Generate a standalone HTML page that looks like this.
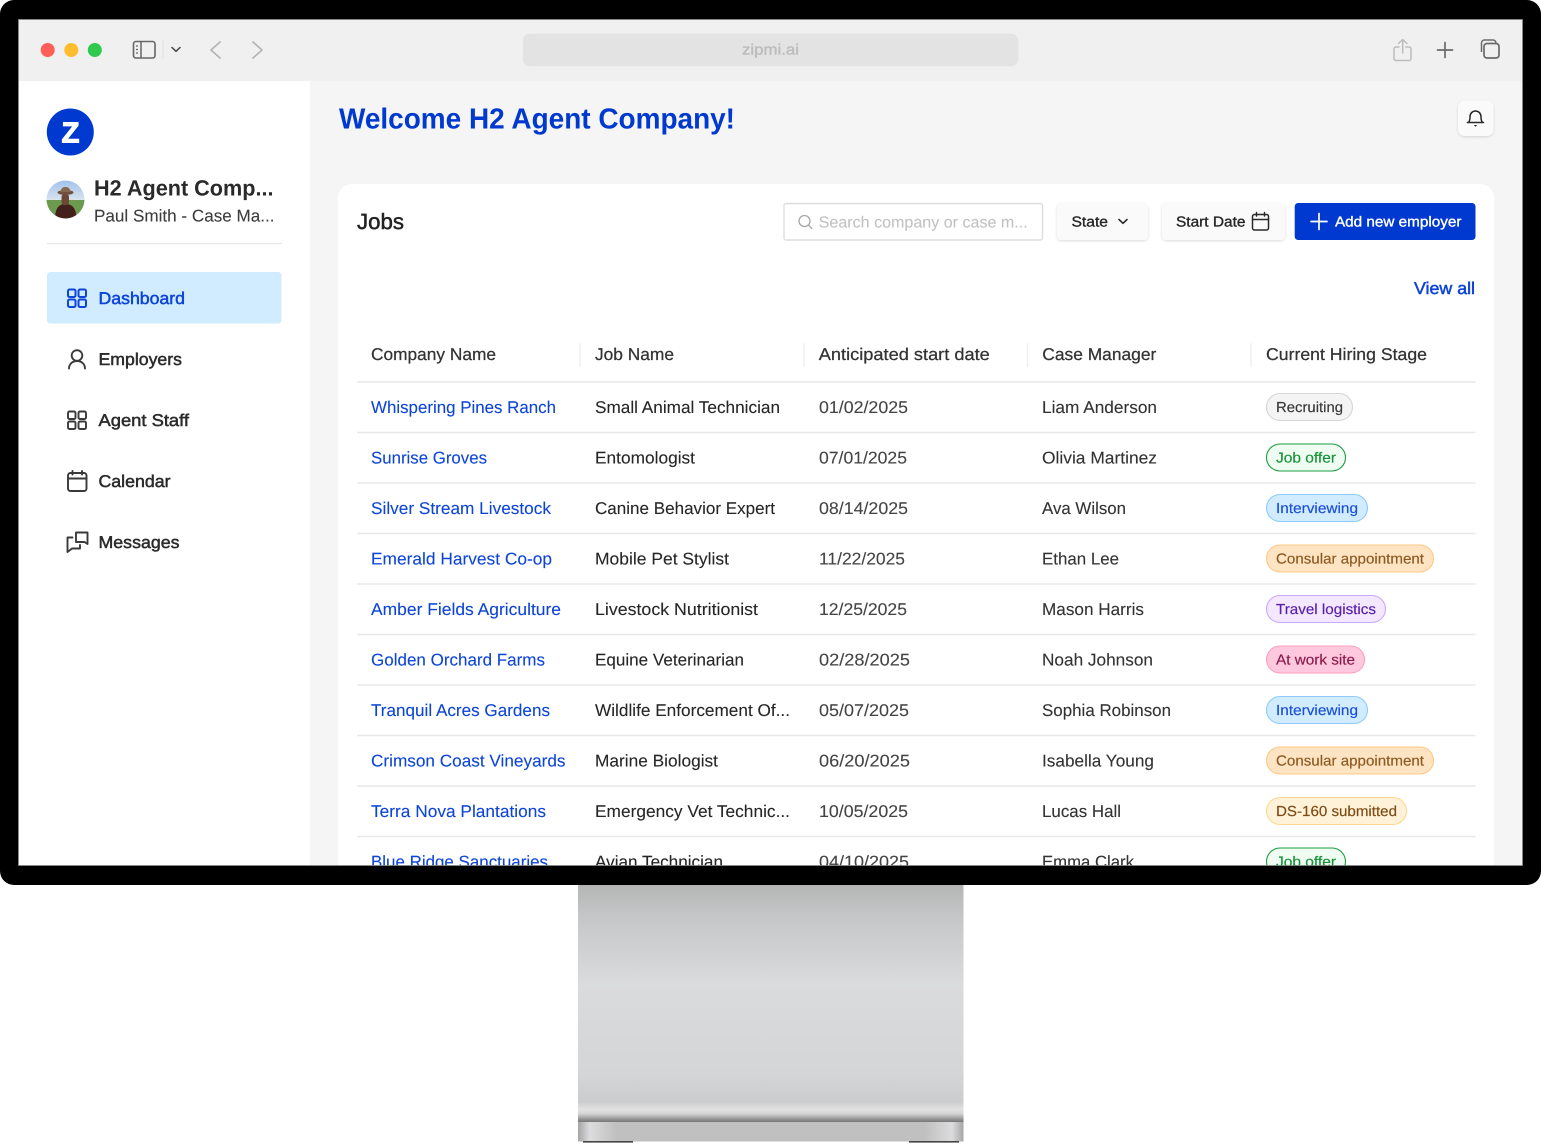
<!DOCTYPE html>
<html lang="en"><head><meta charset="utf-8"><title>Zipmi</title>
<style>
html,body{margin:0;padding:0;background:#fff;width:1541px;height:1144px;overflow:hidden}
svg{display:block;position:absolute;left:0;top:0}
text{font-family:"Liberation Sans",sans-serif;text-rendering:geometricPrecision}
.t{font-size:17px;fill:#262626;stroke:#262626;stroke-width:.1px}
.l{font-size:17px;fill:#0d45d8;stroke:#0d45d8;stroke-width:.1px}
.d{font-size:17px;fill:#444;stroke:#444;stroke-width:.1px}
.h{font-size:17px;fill:#333;stroke:#333;stroke-width:.25px}
.n{font-size:17px;fill:#2b2b2b;stroke:#2b2b2b;stroke-width:.5px}
.b{font-size:14.5px;stroke-width:.18px}
.m{font-size:14.5px;fill:#262626;stroke:#262626;stroke-width:.35px}
.i{fill:none;stroke:#3a3a3a;stroke-width:1.9;stroke-linecap:round;stroke-linejoin:round}
.r{stroke:#e8e8e8;stroke-width:1.4}
</style></head><body>
<svg width="1541" height="1144" viewBox="0 0 1541 1144" xmlns="http://www.w3.org/2000/svg">
<defs>
<linearGradient id="st" x1="0" y1="0" x2="0" y2="1">
<stop offset="0" stop-color="#b4b5b5"/><stop offset=".14" stop-color="#c6c7c8"/><stop offset=".42" stop-color="#dadbdd"/><stop offset=".8" stop-color="#d4d5d7"/><stop offset=".915" stop-color="#cbcccd"/><stop offset=".945" stop-color="#e2e2e3"/><stop offset=".965" stop-color="#d4d4d4"/><stop offset=".99" stop-color="#8f8f8f"/><stop offset="1" stop-color="#777"/>
</linearGradient>
<linearGradient id="ft" x1="0" y1="0" x2="1" y2="0">
<stop offset="0" stop-color="#a5a5a5"/><stop offset=".03" stop-color="#dcdcde"/><stop offset=".1" stop-color="#c0c0c0"/><stop offset=".9" stop-color="#c0c0c0"/><stop offset=".97" stop-color="#dcdcde"/><stop offset="1" stop-color="#a5a5a5"/>
</linearGradient>
<linearGradient id="sky" x1="0" y1="0" x2="0" y2="1"><stop offset="0" stop-color="#9fc0ea"/><stop offset="1" stop-color="#dfe8ef"/></linearGradient>
<clipPath id="av"><circle cx="65.5" cy="199.5" r="19"/></clipPath>
<filter id="sh" x="-20%" y="-20%" width="140%" height="150%"><feDropShadow dx="0" dy="1" stdDeviation="1.3" flood-color="#000" flood-opacity=".14"/></filter>
</defs>

<!-- stand -->
<rect x="578" y="885" width="385.5" height="237" fill="url(#st)"/>
<rect x="578" y="1122" width="385.5" height="19.5" fill="url(#ft)"/>
<rect x="583" y="1141" width="50" height="1.6" fill="#444"/>
<rect x="909" y="1141" width="50" height="1.6" fill="#444"/>

<!-- screen background -->
<rect x="18" y="19" width="1505" height="847" fill="#f5f5f5"/>
<rect x="18" y="19" width="1505" height="62" fill="#f0f0f0"/>
<rect x="18" y="81" width="292" height="785" fill="#fff"/>

<!-- browser toolbar -->
<circle cx="47.7" cy="50" r="7" fill="#fe5f57"/>
<circle cx="71.3" cy="50" r="7" fill="#febc2e"/>
<circle cx="94.8" cy="50" r="7" fill="#30c94d"/>
<rect x="133.5" y="41.5" width="21.5" height="16.5" rx="2.5" fill="none" stroke="#666" stroke-width="1.6"/>
<path d="M141 42v16" stroke="#666" stroke-width="1.5"/>
<path d="M136 46h2M136 49.500h2M136 53h2" stroke="#666" stroke-width="1.3"/>
<path d="M163 40v19" stroke="#e0e0e0" stroke-width="1"/>
<path d="M172 47.500l4 3.800 4-3.800" fill="none" stroke="#444" stroke-width="1.500" stroke-linecap="round" stroke-linejoin="round"/>
<path d="M220 42l-9 8 9 8" fill="none" stroke="#b4b4b4" stroke-width="1.700" stroke-linecap="round" stroke-linejoin="round"/>
<path d="M253 42l9 8-9 8" fill="none" stroke="#b4b4b4" stroke-width="1.700" stroke-linecap="round" stroke-linejoin="round"/>
<rect x="522.800" y="33.700" width="495.500" height="32.500" rx="7" fill="#e3e3e3"/>
<text x="742" y="54.500" font-size="15" fill="#bcbcbc" stroke="#bcbcbc" stroke-width=".4" textLength="57" lengthAdjust="spacingAndGlyphs">zipmi.ai</text>
<path d="M1399 47h-3a2 2 0 0 0-2 2v9.500a2 2 0 0 0 2 2h13a2 2 0 0 0 2-2V49a2 2 0 0 0-2-2h-3M1402.700 53V39.500M1398.500 43.500l4.200-4 4.200 4" fill="none" stroke="#bcbcbc" stroke-width="1.500" stroke-linecap="round" stroke-linejoin="round"/>
<path d="M1445 42.500v15M1437.500 50h15" stroke="#6a6a6a" stroke-width="1.700" stroke-linecap="round"/>
<path d="M1481.500 52v-9a3 3 0 0 1 3-3h8.500a3 3 0 0 1 3 3" fill="none" stroke="#6a6a6a" stroke-width="1.500"/>
<rect x="1484" y="43.500" width="15" height="14.500" rx="3" fill="#f0f0f0" stroke="#6a6a6a" stroke-width="1.700"/>

<!-- sidebar -->
<circle cx="70.300" cy="132" r="23.500" fill="#0039cf"/>
<text x="61.500" y="142.500" font-size="29" font-weight="700" fill="#fff" stroke="#fff" stroke-width="1" textLength="18" lengthAdjust="spacingAndGlyphs">Z</text>
<g clip-path="url(#av)">
<rect x="46" y="180" width="40" height="22" fill="url(#sky)"/>
<rect x="46" y="200" width="40" height="20" fill="#6c9a4f"/>
<path d="M55 220c0-11 3-16 10.500-16s11 5 11 16z" fill="#43201c"/>
<rect x="61.500" y="194" width="7.500" height="11" rx="3" fill="#6e4636"/>
<ellipse cx="65.500" cy="192.500" rx="8" ry="2.400" fill="#70503c"/>
<path d="M60.500 192c.5-4 2.500-5 5-5s4.500 1 5 5z" fill="#86684e"/>
</g>
<text x="94" y="195.500" font-size="22" font-weight="700" fill="#2a2a2a" textLength="179.500" lengthAdjust="spacingAndGlyphs">H2 Agent Comp...</text>
<text x="94" y="221.500" font-size="17" fill="#3d3d3d" stroke="#3d3d3d" stroke-width=".1" textLength="180.500" lengthAdjust="spacingAndGlyphs">Paul Smith - Case Ma...</text>
<path d="M47 243.500h235" stroke="#e6e6e6" stroke-width="1.200"/>
<rect x="47" y="272" width="234.500" height="51.500" rx="3.500" fill="#d1ebff"/>

<g fill="none" stroke="#0d45d8" stroke-width="2">
<rect x="68" y="289.500" width="7.500" height="7.500" rx="1.500"/><rect x="78.500" y="289.500" width="7.500" height="7.500" rx="1.500"/>
<rect x="68" y="299.500" width="7.500" height="7.500" rx="1.500"/><rect x="78.500" y="299.500" width="7.500" height="7.500" rx="1.500"/>
</g>
<text x="98.500" y="304" class="n" style="fill:#0d45d8;stroke:#0d45d8" textLength="86.500" lengthAdjust="spacingAndGlyphs">Dashboard</text>

<g class="i"><circle cx="77" cy="355.500" r="5.300"/><path d="M69 368.500c0-4.500 3.500-7.500 8-7.500s8 3 8 7.500"/></g>
<text x="98.500" y="365" class="n" textLength="83.500" lengthAdjust="spacingAndGlyphs">Employers</text>

<g class="i">
<rect x="68" y="411.500" width="7.500" height="7.500" rx="1.500"/><rect x="78.500" y="411.500" width="7.500" height="7.500" rx="1.500"/>
<rect x="68" y="421.500" width="7.500" height="7.500" rx="1.500"/><rect x="78.500" y="421.500" width="7.500" height="7.500" rx="1.500"/>
</g>
<text x="98.500" y="426" class="n" textLength="90.500" lengthAdjust="spacingAndGlyphs">Agent Staff</text>

<g class="i"><rect x="68" y="473" width="18.500" height="18" rx="2.500"/><path d="M68 478.500h18.500M72.500 471v3.500M82 471v3.500"/></g>
<text x="98.500" y="487" class="n" textLength="72" lengthAdjust="spacingAndGlyphs">Calendar</text>

<g class="i"><path d="M76 532.500h11.500v11.500l-3-2H76zM72.500 537.500H67.500v14.500l4.500-3.500h8v-3.500"/></g>
<text x="98.500" y="548" class="n" textLength="81" lengthAdjust="spacingAndGlyphs">Messages</text>

<!-- header -->
<text x="339" y="128.500" font-size="29" font-weight="700" fill="#0039cf" textLength="396" lengthAdjust="spacingAndGlyphs">Welcome H2 Agent Company!</text>
<rect x="1458" y="100.500" width="35.500" height="35.500" rx="7" fill="#fafafa" filter="url(#sh)"/>
<path d="M1468.500 122.500c1.200-1.500 1.500-2.500 1.500-5.500 0-3.500 2.200-6 5.500-6s5.500 2.500 5.500 6c0 3 .3 4 1.500 5.500zM1467.500 122.500h16" fill="none" stroke="#2a2a2a" stroke-width="1.500" stroke-linejoin="round" stroke-linecap="round"/>
<path d="M1473.800 125h3.400l-1.700 1.800z" fill="#2a2a2a"/>

<!-- card -->
<rect x="338" y="184" width="1156" height="700" rx="14" fill="#fff"/>
<text x="357" y="229" font-size="22" fill="#222" stroke="#222" stroke-width=".5" textLength="47" lengthAdjust="spacingAndGlyphs">Jobs</text>

<rect x="784" y="203.500" width="258.500" height="36.500" rx="2" fill="#fff" stroke="#dedede" stroke-width="1.400"/>
<circle cx="804.500" cy="221" r="5.500" fill="none" stroke="#a8a8a8" stroke-width="1.300"/><path d="M808.500 225l3.300 3.500" stroke="#a8a8a8" stroke-width="1.300" stroke-linecap="round"/>
<text x="818.700" y="227.500" font-size="16" fill="#c2c2c2" stroke="#c2c2c2" stroke-width=".1" textLength="209" lengthAdjust="spacingAndGlyphs">Search company or case m...</text>

<rect x="1057" y="203" width="91" height="37" rx="4" fill="#fafafa" filter="url(#sh)"/>
<text x="1071.500" y="226.500" class="m" textLength="36.500" lengthAdjust="spacingAndGlyphs">State</text>
<path d="M1119 219.500l4 3.800 4-3.800" fill="none" stroke="#2a2a2a" stroke-width="1.600" stroke-linecap="round" stroke-linejoin="round"/>

<rect x="1162" y="203" width="123" height="37" rx="4" fill="#fafafa" filter="url(#sh)"/>
<text x="1176" y="226.500" class="m" textLength="69.500" lengthAdjust="spacingAndGlyphs">Start Date</text>
<g fill="none" stroke="#2a2a2a" stroke-width="1.500" stroke-linecap="round"><rect x="1252.500" y="214.500" width="16" height="15.500" rx="2"/><path d="M1252.500 219.500h16M1256.500 212.500v3.500M1264.500 212.500v3.500"/></g>

<rect x="1294.700" y="203" width="180.800" height="37" rx="3.500" fill="#0039cf"/>
<path d="M1319 213.500v16M1311 221.500h16" stroke="#fff" stroke-width="1.700" stroke-linecap="round"/>
<text x="1335" y="226.500" class="m" style="fill:#fff;stroke:#fff" textLength="126.500" lengthAdjust="spacingAndGlyphs">Add new employer</text>

<text x="1414" y="294" font-size="17" fill="#0d45d8" stroke="#0d45d8" stroke-width=".5" textLength="61" lengthAdjust="spacingAndGlyphs">View all</text>

<!-- table head -->
<text x="371" y="360" class="h" textLength="125" lengthAdjust="spacingAndGlyphs">Company Name</text>
<text x="595" y="360" class="h" textLength="79" lengthAdjust="spacingAndGlyphs">Job Name</text>
<text x="818.800" y="360" class="h" textLength="171" lengthAdjust="spacingAndGlyphs">Anticipated start date</text>
<text x="1042.300" y="360" class="h" textLength="114" lengthAdjust="spacingAndGlyphs">Case Manager</text>
<text x="1266" y="360" class="h" textLength="161" lengthAdjust="spacingAndGlyphs">Current Hiring Stage</text>
<path d="M580 343v24M804 343v24M1027.500 343v24M1251 343v24" stroke="#efefef" stroke-width="1.300"/>
<path class="r" d="M357 382h1118.500" stroke-width="1.800"/>
<path class="r" d="M357 432.500h1118.500M357 483h1118.500M357 533.500h1118.500M357 584h1118.500M357 634.500h1118.500M357 685h1118.500M357 735.500h1118.500M357 786h1118.500M357 836.500h1118.500"/>

<!-- row 1 -->
<text x="371" y="413" class="l" textLength="185" lengthAdjust="spacingAndGlyphs">Whispering Pines Ranch</text>
<text x="595" y="413" class="t" textLength="185" lengthAdjust="spacingAndGlyphs">Small Animal Technician</text>
<text x="819" y="413" class="d" textLength="89" lengthAdjust="spacingAndGlyphs">01/02/2025</text>
<text x="1042" y="413" class="t" style="fill:#333" textLength="115" lengthAdjust="spacingAndGlyphs">Liam Anderson</text>
<rect x="1266.500" y="393.500" width="86" height="27" rx="13.500" fill="#f4f4f4" stroke="#d6d6d6" stroke-width="1.100"/>
<text x="1276" y="412" class="b" fill="#383838" stroke="#383838" textLength="67" lengthAdjust="spacingAndGlyphs">Recruiting</text>

<!-- row 2 -->
<text x="371" y="463.500" class="l" textLength="116" lengthAdjust="spacingAndGlyphs">Sunrise Groves</text>
<text x="595" y="463.500" class="t" textLength="100" lengthAdjust="spacingAndGlyphs">Entomologist</text>
<text x="819" y="463.500" class="d" textLength="88" lengthAdjust="spacingAndGlyphs">07/01/2025</text>
<text x="1042" y="463.500" class="t" style="fill:#333" textLength="115" lengthAdjust="spacingAndGlyphs">Olivia Martinez</text>
<rect x="1266.500" y="444" width="79" height="27" rx="13.500" fill="#eefcf1" stroke="#1f9c41" stroke-width="1.100"/>
<text x="1276" y="462.500" class="b" fill="#17933a" stroke="#17933a" textLength="60" lengthAdjust="spacingAndGlyphs">Job offer</text>

<!-- row 3 -->
<text x="371" y="514" class="l" textLength="180" lengthAdjust="spacingAndGlyphs">Silver Stream Livestock</text>
<text x="595" y="514" class="t" textLength="180" lengthAdjust="spacingAndGlyphs">Canine Behavior Expert</text>
<text x="819" y="514" class="d" textLength="89" lengthAdjust="spacingAndGlyphs">08/14/2025</text>
<text x="1042" y="514" class="t" style="fill:#333" textLength="84" lengthAdjust="spacingAndGlyphs">Ava Wilson</text>
<rect x="1266.500" y="494.500" width="101" height="27" rx="13.500" fill="#d1ebff" stroke="#8fcbff" stroke-width="1.100"/>
<text x="1276" y="513" class="b" fill="#1a4fd8" stroke="#1a4fd8" textLength="82" lengthAdjust="spacingAndGlyphs">Interviewing</text>

<!-- row 4 -->
<text x="371" y="564.500" class="l" textLength="181" lengthAdjust="spacingAndGlyphs">Emerald Harvest Co-op</text>
<text x="595" y="564.500" class="t" textLength="134" lengthAdjust="spacingAndGlyphs">Mobile Pet Stylist</text>
<text x="819" y="564.500" class="d" textLength="86" lengthAdjust="spacingAndGlyphs">11/22/2025</text>
<text x="1042" y="564.500" class="t" style="fill:#333" textLength="77" lengthAdjust="spacingAndGlyphs">Ethan Lee</text>
<rect x="1266.500" y="545" width="167" height="27" rx="13.500" fill="#ffe4c4" stroke="#ffc884" stroke-width="1.100"/>
<text x="1276" y="563.500" class="b" fill="#8c5a20" stroke="#8c5a20" textLength="148" lengthAdjust="spacingAndGlyphs">Consular appointment</text>

<!-- row 5 -->
<text x="371" y="615" class="l" textLength="190" lengthAdjust="spacingAndGlyphs">Amber Fields Agriculture</text>
<text x="595" y="615" class="t" textLength="163" lengthAdjust="spacingAndGlyphs">Livestock Nutritionist</text>
<text x="819" y="615" class="d" textLength="88" lengthAdjust="spacingAndGlyphs">12/25/2025</text>
<text x="1042" y="615" class="t" style="fill:#333" textLength="102" lengthAdjust="spacingAndGlyphs">Mason Harris</text>
<rect x="1266.500" y="595.500" width="119" height="27" rx="13.500" fill="#f3e8ff" stroke="#cba8ff" stroke-width="1.100"/>
<text x="1276" y="614" class="b" fill="#5a20a8" stroke="#5a20a8" textLength="100" lengthAdjust="spacingAndGlyphs">Travel logistics</text>

<!-- row 6 -->
<text x="371" y="665.500" class="l" textLength="174" lengthAdjust="spacingAndGlyphs">Golden Orchard Farms</text>
<text x="595" y="665.500" class="t" textLength="149" lengthAdjust="spacingAndGlyphs">Equine Veterinarian</text>
<text x="819" y="665.500" class="d" textLength="91" lengthAdjust="spacingAndGlyphs">02/28/2025</text>
<text x="1042" y="665.500" class="t" style="fill:#333" textLength="111" lengthAdjust="spacingAndGlyphs">Noah Johnson</text>
<rect x="1266.500" y="646" width="98" height="27" rx="13.500" fill="#ffc8dc" stroke="#ff9fc2" stroke-width="1.100"/>
<text x="1276" y="664.500" class="b" fill="#8c1c50" stroke="#8c1c50" textLength="79" lengthAdjust="spacingAndGlyphs">At work site</text>

<!-- row 7 -->
<text x="371" y="716" class="l" textLength="179" lengthAdjust="spacingAndGlyphs">Tranquil Acres Gardens</text>
<text x="595" y="716" class="t" textLength="195" lengthAdjust="spacingAndGlyphs">Wildlife Enforcement Of...</text>
<text x="819" y="716" class="d" textLength="90" lengthAdjust="spacingAndGlyphs">05/07/2025</text>
<text x="1042" y="716" class="t" style="fill:#333" textLength="129" lengthAdjust="spacingAndGlyphs">Sophia Robinson</text>
<rect x="1266.500" y="696.500" width="101" height="27" rx="13.500" fill="#d1ebff" stroke="#8fcbff" stroke-width="1.100"/>
<text x="1276" y="715" class="b" fill="#1a4fd8" stroke="#1a4fd8" textLength="82" lengthAdjust="spacingAndGlyphs">Interviewing</text>

<!-- row 8 -->
<text x="371" y="766.500" class="l" textLength="194.500" lengthAdjust="spacingAndGlyphs">Crimson Coast Vineyards</text>
<text x="595" y="766.500" class="t" textLength="123" lengthAdjust="spacingAndGlyphs">Marine Biologist</text>
<text x="819" y="766.500" class="d" textLength="91" lengthAdjust="spacingAndGlyphs">06/20/2025</text>
<text x="1042" y="766.500" class="t" style="fill:#333" textLength="112" lengthAdjust="spacingAndGlyphs">Isabella Young</text>
<rect x="1266.500" y="747" width="167" height="27" rx="13.500" fill="#ffe4c4" stroke="#ffc884" stroke-width="1.100"/>
<text x="1276" y="765.500" class="b" fill="#8c5a20" stroke="#8c5a20" textLength="148" lengthAdjust="spacingAndGlyphs">Consular appointment</text>

<!-- row 9 -->
<text x="371" y="817" class="l" textLength="175" lengthAdjust="spacingAndGlyphs">Terra Nova Plantations</text>
<text x="595" y="817" class="t" textLength="195" lengthAdjust="spacingAndGlyphs">Emergency Vet Technic...</text>
<text x="819" y="817" class="d" textLength="89" lengthAdjust="spacingAndGlyphs">10/05/2025</text>
<text x="1042" y="817" class="t" style="fill:#333" textLength="79" lengthAdjust="spacingAndGlyphs">Lucas Hall</text>
<rect x="1266.500" y="797.500" width="140" height="27" rx="13.500" fill="#fff2d8" stroke="#ffd88e" stroke-width="1.100"/>
<text x="1276" y="816" class="b" fill="#7f4a14" stroke="#7f4a14" textLength="121" lengthAdjust="spacingAndGlyphs">DS-160 submitted</text>

<!-- row 10 -->
<text x="371" y="867.500" class="l" textLength="177" lengthAdjust="spacingAndGlyphs">Blue Ridge Sanctuaries</text>
<text x="595" y="867.500" class="t" textLength="128" lengthAdjust="spacingAndGlyphs">Avian Technician</text>
<text x="819" y="867.500" class="d" textLength="90" lengthAdjust="spacingAndGlyphs">04/10/2025</text>
<text x="1042" y="867.500" class="t" style="fill:#333" textLength="92" lengthAdjust="spacingAndGlyphs">Emma Clark</text>
<rect x="1266.500" y="848" width="79" height="27" rx="13.500" fill="#eefcf1" stroke="#1f9c41" stroke-width="1.100"/>
<text x="1276" y="866.500" class="b" fill="#17933a" stroke="#17933a" textLength="60" lengthAdjust="spacingAndGlyphs">Job offer</text>

<!-- monitor bezel -->
<path fill-rule="evenodd" fill="#000" d="M14 0H1527a14 14 0 0 1 14 14V871a14 14 0 0 1-14 14H14a14 14 0 0 1-14-14V14A14 14 0 0 1 14 0ZM18.500 19.500V865.500H1522.500V19.500Z"/>
<rect x="18.500" y="19.500" width="1504" height="846" fill="none" stroke="#8a8a8a" stroke-width=".8"/>
</svg>
</body></html>
